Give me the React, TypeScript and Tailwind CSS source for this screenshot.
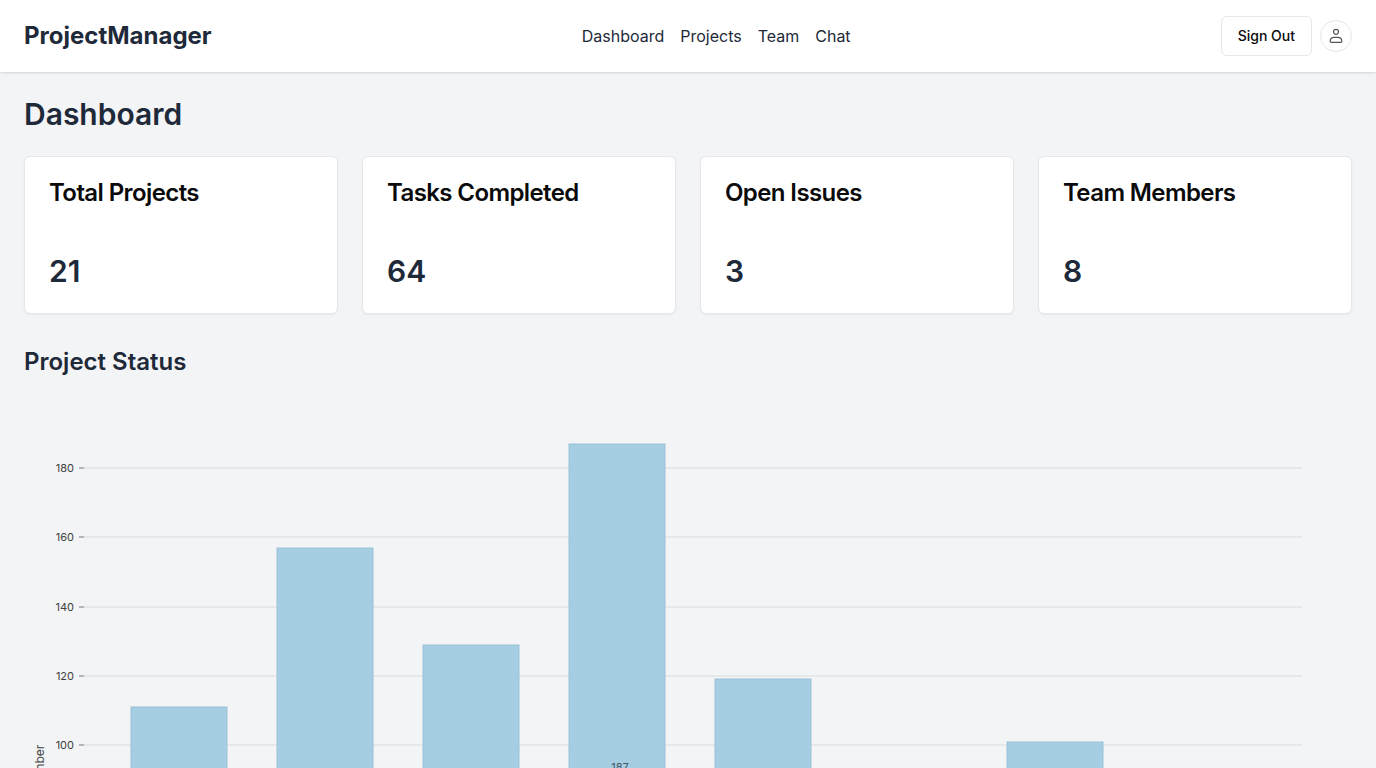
import { useEffect, useRef, useState } from "react";

const links = ["Dashboard", "Projects", "Team", "Chat"];

const stats = [
  { title: "Total Projects", value: 21 },
  { title: "Tasks Completed", value: 64 },
  { title: "Open Issues", value: 3 },
  { title: "Team Members", value: 8 },
];

const data = [
  { name: "Jan", count: 111 },
  { name: "Feb", count: 157 },
  { name: "Mar", count: 129 },
  { name: "Apr", count: 187 },
  { name: "May", count: 119 },
  { name: "Jun", count: 72 },
  { name: "Jul", count: 101 },
  { name: "Aug", count: 64 },
];

const ticks = [0, 20, 40, 60, 80, 100, 120, 140, 160, 180];
const margin = { top: 50, right: 50, bottom: 50, left: 60 };

function PersonIcon() {
  return (
    <svg viewBox="0 0 16 16" className="size-4 fill-none stroke-current" strokeWidth="1.2" aria-hidden="true">
      <circle cx="8" cy="3.8" r="2.5" />
      <path d="M3.3 14.4C2.7 14.4 2.3 14 2.3 13.4V12.6C2.3 10.6 3.9 9.3 6.2 9.3H9.8C12.1 9.3 13.7 10.6 13.7 12.6V13.4C13.7 14 13.3 14.4 12.7 14.4Z" />
    </svg>
  );
}

function BarChart() {
  const box = useRef<HTMLDivElement>(null);
  const [size, setSize] = useState({ width: 1328, height: 747 });

  useEffect(() => {
    const node = box.current;
    if (!node) return;
    const observer = new ResizeObserver(() =>
      setSize({ width: node.clientWidth, height: node.clientHeight })
    );
    observer.observe(node);
    return () => observer.disconnect();
  }, []);

  const innerWidth = size.width - margin.left - margin.right;
  const innerHeight = size.height - margin.top - margin.bottom;
  const max = Math.max(...data.map((d) => d.count));
  const y = (value: number) => Math.round(innerHeight * (1 - value / max));
  const step = Math.floor(innerWidth / (data.length + 0.33));
  const barWidth = Math.round(step * 0.66);
  const start = Math.floor((innerWidth - step * (data.length - 1) - barWidth) / 2) - 3;

  return (
    <div ref={box} className="aspect-video w-full overflow-hidden">
      <svg width={size.width} height={size.height} role="img" aria-label="Project status" className="block">
        <g transform={`translate(${margin.left},${margin.top})`}>
          {ticks.map((tick) => (
            <g key={tick} transform={`translate(0,${y(tick)})`}>
              <line x2={innerWidth} className="stroke-[#e5e7e9]" strokeWidth={2} />
              <line x1={-5} className="stroke-[#777777]" />
              <text x={-10} textAnchor="end" dominantBaseline="central" className="fill-[#404040] text-[11px]">
                {tick}
              </text>
            </g>
          ))}
          <text
            transform={`translate(-45,${innerHeight / 2}) rotate(-90)`}
            textAnchor="middle"
            dominantBaseline="central"
            className="fill-[#404040] text-xs"
          >
            Number
          </text>
          {data.map((d, i) => {
            const height = innerHeight - y(d.count);
            return (
              <g key={d.name} transform={`translate(${start + i * step},${y(d.count)})`}>
                <rect width={barWidth} height={height} className="fill-[#a6cee3] stroke-[#9ac1d5]" />
                <text
                  x={barWidth / 2 + 3}
                  y={height / 2 - 1}
                  textAnchor="middle"
                  dominantBaseline="central"
                  className="fill-[#3f5968] text-[11px]"
                >
                  {d.count}
                </text>
                <text x={barWidth / 2} y={height + 18} textAnchor="middle" className="fill-[#404040] text-[11px]">
                  {d.name}
                </text>
              </g>
            );
          })}
        </g>
      </svg>
    </div>
  );
}

export default function App() {
  return (
    <div className="min-h-screen bg-gray-100 font-['Inter',sans-serif] text-gray-800">
      <header className="flex items-center justify-between bg-white px-6 py-4 shadow">
        <div className="text-2xl font-bold">ProjectManager</div>
        <nav className="flex gap-4">
          {links.map((link) => (
            <a key={link} href="#" className="text-base">
              {link}
            </a>
          ))}
        </nav>
        <div className="flex items-center gap-2">
          <button className="h-10 rounded-md border border-gray-200 bg-white px-4 text-sm font-medium text-[#0a0a0a]">
            Sign Out
          </button>
          <button
            aria-label="Account"
            className="flex size-8 items-center justify-center rounded-full border border-gray-200 bg-white text-[#555555]"
          >
            <PersonIcon />
          </button>
        </div>
      </header>
      <main className="p-6">
        <h1 className="mb-6 text-3xl font-semibold">Dashboard</h1>
        <section className="grid grid-cols-4 gap-6">
          {stats.map((stat) => (
            <article key={stat.title} className="rounded-md border border-gray-200 bg-white shadow-xs">
              <h3 className="p-6 text-2xl leading-none font-semibold tracking-tight text-[#0a0a0a]">{stat.title}</h3>
              <p className="p-6 text-3xl font-semibold">{stat.value}</p>
            </article>
          ))}
        </section>
        <section className="mt-8">
          <h2 className="mb-4 text-2xl font-semibold">Project Status</h2>
          <BarChart />
        </section>
      </main>
    </div>
  );
}
